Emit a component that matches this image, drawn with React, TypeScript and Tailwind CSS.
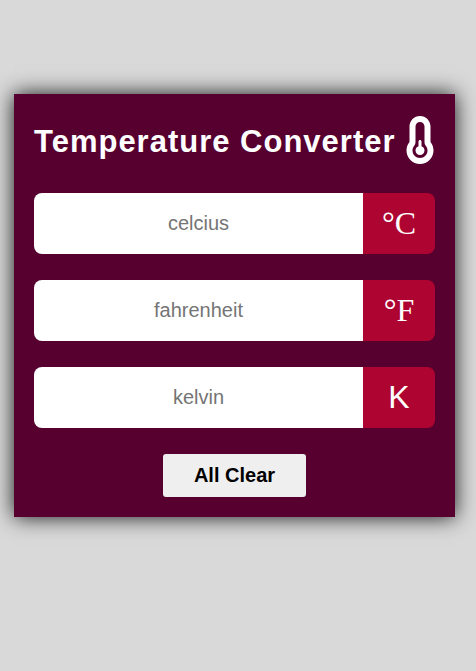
import { useState } from "react";
import { FaTemperatureQuarter } from "react-icons/fa6";

type Unit = "celcius" | "fahrenheit" | "kelvin";

const fields: { unit: Unit; symbol: string; symbolClass: string }[] = [
  { unit: "celcius", symbol: "°C", symbolClass: "font-['Liberation_Serif',serif]" },
  { unit: "fahrenheit", symbol: "°F", symbolClass: "font-['Liberation_Serif',serif]" },
  { unit: "kelvin", symbol: "K", symbolClass: "" },
];

const empty: Record<Unit, string> = { celcius: "", fahrenheit: "", kelvin: "" };

function toCelsius(unit: Unit, n: number) {
  if (unit === "fahrenheit") return ((n - 32) * 5) / 9;
  if (unit === "kelvin") return n - 273.15;
  return n;
}

export default function App() {
  const [values, setValues] = useState(empty);

  function update(unit: Unit, text: string) {
    if (text === "" || Number.isNaN(Number(text))) {
      setValues({ ...empty, [unit]: text });
      return;
    }
    const c = toCelsius(unit, Number(text));
    setValues({
      celcius: c.toFixed(2),
      fahrenheit: ((c * 9) / 5 + 32).toFixed(2),
      kelvin: (c + 273.15).toFixed(2),
      [unit]: text,
    });
  }

  return (
    <div className="flex min-h-screen items-center justify-center bg-[#d9d9d9] pr-[21px] pb-[60px] pl-[14px] font-['Liberation_Sans',Arial,sans-serif]">
      <main className="flex w-full max-w-xl flex-col gap-[26px] bg-[#570030] p-5 shadow-[0_0_20px_rgba(0,0,0,0.9)]">
        <header className="flex items-center justify-between pb-px text-white">
          <h1 className="pt-1 text-[31px] leading-[48px] font-bold tracking-[1px] whitespace-nowrap">
            Temperature Converter
          </h1>
          <FaTemperatureQuarter className="h-12 w-[30px] shrink-0" aria-hidden="true" />
        </header>
        {fields.map(({ unit, symbol, symbolClass }) => (
          <div key={unit} className="flex h-[61px] overflow-hidden rounded-lg">
            <input
              id={unit}
              type="text"
              inputMode="decimal"
              placeholder={unit}
              value={values[unit]}
              onChange={(e) => update(unit, e.target.value)}
              className="min-w-0 flex-1 bg-white pb-[2px] text-center text-xl text-black outline-none placeholder:text-[#757575]"
            />
            <label
              htmlFor={unit}
              className={`flex w-[72px] items-center justify-center bg-[#ae0431] pb-[2px] text-[32px] text-white ${symbolClass}`}
            >
              {symbol}
            </label>
          </div>
        ))}
        <button
          type="button"
          onClick={() => setValues(empty)}
          className="h-[43px] self-center rounded-[3px] bg-[#efefef] px-[31px] pb-[2px] text-xl font-bold text-black"
        >
          All Clear
        </button>
      </main>
    </div>
  );
}
